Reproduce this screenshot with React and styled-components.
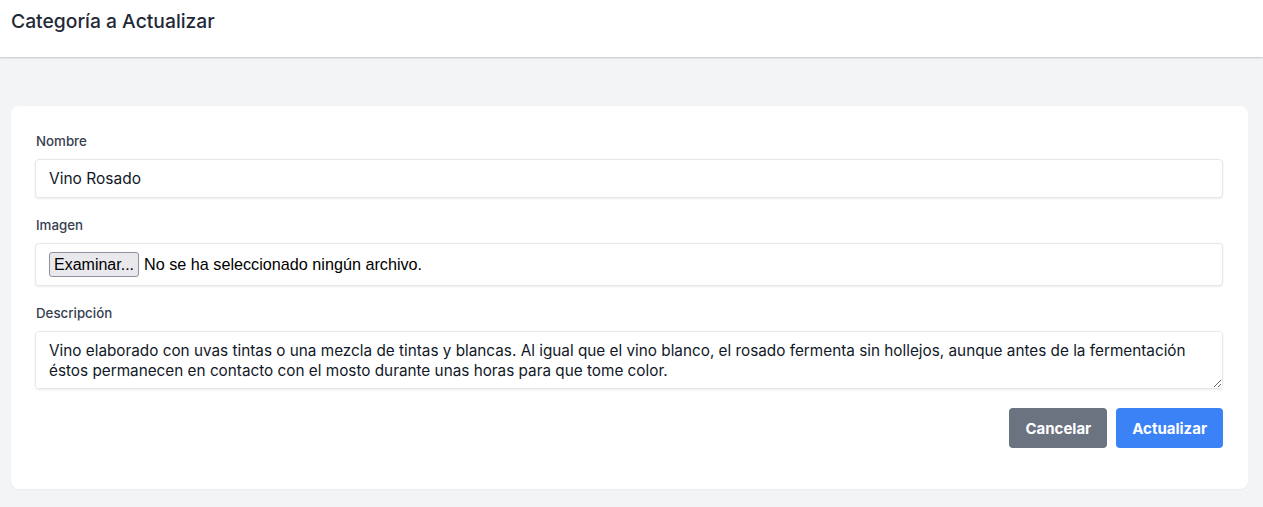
import React from "react";
import styled, { createGlobalStyle } from "styled-components";

const GlobalStyle = createGlobalStyle`
  * { box-sizing: border-box; }
  body {
    margin: 0;
    background: #f3f4f6;
    font-family: Inter, "Noto Sans", sans-serif;
    color: #1f2937;
  }
`;

const App = () => {
  return (
    <>
      <GlobalStyle />
      <Header>
        <Title>Categoría a Actualizar</Title>
      </Header>
      <Main>
        <Card>
          <Field>
            <Label htmlFor="nombre">Nombre</Label>
            <Input id="nombre" defaultValue="Vino Rosado" />
          </Field>
          <Field>
            <Label htmlFor="imagen">Imagen</Label>
            <FileBox>
              <HiddenFile id="imagen" type="file" />
              <FileButton htmlFor="imagen">Examinar...</FileButton>
              <FileText>No se ha seleccionado ningún archivo.</FileText>
            </FileBox>
          </Field>
          <Field>
            <Label htmlFor="descripcion">Descripción</Label>
            <TextArea
              id="descripcion"
              rows={2}
              defaultValue="Vino elaborado con uvas tintas o una mezcla de tintas y blancas. Al igual que el vino blanco, el rosado fermenta sin hollejos, aunque antes de la fermentación éstos permanecen en contacto con el mosto durante unas horas para que tome color."
            />
          </Field>
          <Actions>
            <Button $variant="gray">Cancelar</Button>
            <Button $variant="blue">Actualizar</Button>
          </Actions>
        </Card>
      </Main>
    </>
  );
};

export default App;

const Header = styled.header`
  height: 57px;
  background: #fff;
  box-shadow: 0 1px 2px rgba(0, 0, 0, 0.12), 0 1px 1px rgba(0, 0, 0, 0.06);
  padding: 8px 11px;
`;

const Title = styled.h1`
  margin: 0;
  font-size: 19.3px;
  font-weight: 500;
  line-height: 26px;
  color: #1f2937;
`;

const Main = styled.main`
  padding: 49px 15px 18px 11px;
`;

const Card = styled.div`
  background: #fff;
  border-radius: 8px;
  padding: 25px 25px 41px 24px;
  box-shadow: 0 1px 2px rgba(0, 0, 0, 0.04);
`;

const Field = styled.div`
  display: flex;
  flex-direction: column;
  margin-bottom: 17px;
`;

const Label = styled.label`
  font-size: 13.3px;
  font-weight: 500;
  line-height: 20px;
  color: #374151;
  margin-bottom: 8px;
  padding-left: 1px;
`;

const boxStyle = `
  width: 100%;
  border: 1px solid #e5e7eb;
  border-radius: 4px;
  box-shadow: 0 1px 2px rgba(0, 0, 0, 0.08);
  background: #fff;
  color: #111827;
`;

const Input = styled.input`
  ${boxStyle}
  height: 39px;
  padding: 0 13px;
  font-family: Inter, "Noto Sans", sans-serif;
  font-size: 15.5px;
  outline: none;
`;

const FileBox = styled.div`
  ${boxStyle}
  height: 43px;
  display: flex;
  align-items: center;
  padding: 0 13px;
  font-family: "Liberation Sans", Arial, sans-serif;
  font-size: 16.2px;
`;

const HiddenFile = styled.input`
  display: none;
`;

const FileButton = styled.label`
  height: 25px;
  display: inline-flex;
  align-items: center;
  padding: 0 4px;
  border: 1px solid #8f8f9d;
  border-radius: 3px;
  background: #e9e9ed;
  color: #000;
  font-size: 16px;
  margin-right: 5px;
`;

const FileText = styled.span`
  color: #000;
`;

const TextArea = styled.textarea`
  ${boxStyle}
  height: 58px;
  padding: 9px 13px;
  font-family: Inter, "Noto Sans", sans-serif;
  font-size: 15.3px;
  line-height: 20px;
  resize: vertical;
  outline: none;
`;

const Actions = styled.div`
  display: flex;
  justify-content: flex-end;
  gap: 9px;
  margin-top: 19px;
`;

const Button = styled.button`
  height: 40px;
  padding: 0 16px;
  border: none;
  border-radius: 4px;
  color: #fff;
  font-family: Inter, "Noto Sans", sans-serif;
  font-size: 15px;
  font-weight: 700;
  background: ${(p) => (p.$variant === "blue" ? "#3b82f6" : "#6b7280")};
`;
